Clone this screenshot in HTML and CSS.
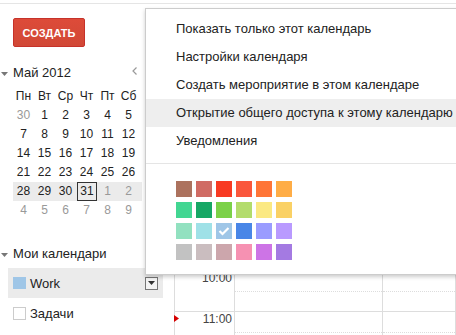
FILE: index.html
```html
<!DOCTYPE html>
<html>
<head>
    <title>Календарь</title>
    <link rel="stylesheet" href="styles.css">
</head>
<body>
    <div class="topbar"></div>
    <div class="page">
        <aside class="sidebar">
            <button class="create">СОЗДАТЬ</button>

            <div class="month-head">
                <span class="toggle"><svg width="7" height="4" viewBox="0 0 7 4"><polygon points="0,0 7,0 3.5,4" fill="#777"/></svg></span>
                <span class="month-title">Май 2012</span>
                <svg class="prev" width="5" height="8" viewBox="0 0 5 8"><polyline points="4.5,0.5 1,4 4.5,7.5" fill="none" stroke="#999" stroke-width="1.2"/></svg>
            </div>

            <div class="minical">
                <div class="week head"><span>Пн</span><span>Вт</span><span>Ср</span><span>Чт</span><span>Пт</span><span>Сб</span></div>
                <div class="week"><span class="other">30</span><span>1</span><span>2</span><span>3</span><span>4</span><span>5</span></div>
                <div class="week"><span>7</span><span>8</span><span>9</span><span>10</span><span>11</span><span>12</span></div>
                <div class="week"><span>14</span><span>15</span><span>16</span><span>17</span><span>18</span><span>19</span></div>
                <div class="week"><span>21</span><span>22</span><span>23</span><span>24</span><span>25</span><span>26</span></div>
                <div class="week current"><span>28</span><span>29</span><span>30</span><span class="today">31</span><span class="other">1</span><span class="other">2</span></div>
                <div class="week"><span class="other">4</span><span class="other">5</span><span class="other">6</span><span class="other">7</span><span class="other">8</span><span class="other">9</span></div>
            </div>

            <div class="section-head">
                <span class="toggle"><svg width="7" height="4" viewBox="0 0 7 4"><polygon points="0,0 7,0 3.5,4" fill="#777"/></svg></span>
                <span>Мои календари</span>
            </div>

            <div class="cal-item active">
                <span class="swatch"></span>
                <span>Work</span>
                <span class="dd-btn"><svg width="7" height="4" viewBox="0 0 7 4"><polygon points="0,0 7,0 3.5,4" fill="#333"/></svg></span>
            </div>
            <div class="cal-item">
                <span class="checkbox"></span>
                <span>Задачи</span>
            </div>
        </aside>

        <main class="grid">
            <div class="hour"><div class="time"></div><div class="day-col"></div><div class="day-col"></div></div>
            <div class="hour"><div class="time"></div><div class="day-col"></div><div class="day-col"></div></div>
            <div class="hour"><div class="time"></div><div class="day-col"></div><div class="day-col"></div></div>
            <div class="hour"><div class="time"></div><div class="day-col"></div><div class="day-col"></div></div>
            <div class="hour"><div class="time">10:00</div><div class="day-col"></div><div class="day-col"></div></div>
            <div class="hour">
                <svg class="now" width="5" height="7" viewBox="0 0 5 7"><polygon points="0,0 5,3.5 0,7" fill="#d50000"/></svg>
                <div class="time">11:00</div><div class="day-col"></div><div class="day-col"></div>
            </div>
        </main>
    </div>

    <!-- calendar options menu -->
    <div class="menu">
        <div class="menu-item">Показать только этот календарь</div>
        <div class="menu-item">Настройки календаря</div>
        <div class="menu-item">Создать мероприятие в этом календаре</div>
        <div class="menu-item hover">Открытие общего доступа к этому календарю</div>
        <div class="menu-item">Уведомления</div>
        <div class="menu-sep"></div>
        <div class="palette">
            <span style="background:#ac725e"></span>
            <span style="background:#d06b64"></span>
            <span style="background:#f83a22"></span>
            <span style="background:#fa573c"></span>
            <span style="background:#ff7537"></span>
            <span style="background:#ffad46"></span>
            <span style="background:#42d692"></span>
            <span style="background:#16a765"></span>
            <span style="background:#7bd148"></span>
            <span style="background:#b3dc6c"></span>
            <span style="background:#fbe983"></span>
            <span style="background:#fad165"></span>
            <span style="background:#92e1c0"></span>
            <span style="background:#9fe1e7"></span>
            <span style="background:#9fc6e7"><svg width="16" height="16" viewBox="0 0 16 16"><polyline points="3.5,8 6.5,11 12.5,5" fill="none" stroke="#fff" stroke-width="2.2"/></svg></span>
            <span style="background:#4986e7"></span>
            <span style="background:#9a9cff"></span>
            <span style="background:#b99aff"></span>
            <span style="background:#c2c2c2"></span>
            <span style="background:#cabdbf"></span>
            <span style="background:#cca6ac"></span>
            <span style="background:#f691b2"></span>
            <span style="background:#cd74e6"></span>
            <span style="background:#a47ae2"></span>
        </div>
    </div>
</body>
</html>
```

FILE: styles.css
```css
body {
    margin: 0;
    width: 456px;
    height: 335px;
    overflow: hidden;
    position: relative;
    background: #fff;
    color: #222;
    font-family: "Liberation Sans", Arial, sans-serif;
}
.topbar {
    height: 3px;
    border-bottom: 1px solid #e5e5e5;
}
.page {
    display: flex;
}

/* left column */
.sidebar {
    width: 174px;
    flex: none;
}
.create {
    display: block;
    margin: 14px 0 0 13px;
    width: 72px;
    height: 29px;
    padding: 0;
    border: 1px solid #c6322a;
    border-radius: 2px;
    background: linear-gradient(#dd4b39, #d14836);
    color: #fff;
    font: bold 11px "Liberation Sans", Arial, sans-serif;
}
.month-head,
.section-head {
    display: flex;
    align-items: center;
    height: 18px;
    width: 139px;
    font-size: 13px;
}
.month-head {
    margin-top: 16px;
}
.section-head {
    margin-top: 24px;
}
.toggle {
    width: 13px;
    flex: none;
    display: flex;
    padding-top: 3px;
}
.toggle svg {
    margin-left: 1px;
}
.month-title {
    flex: 1;
}
.prev {
    align-self: flex-start;
    margin-top: 4px;
    margin-right: 2px;
}

.minical {
    width: 129px;
    margin: 6px 0 0 13px;
    font-size: 12px;
}
.week {
    display: grid;
    grid-template-columns: repeat(6, 21px);
    height: 19px;
    line-height: 19px;
    text-align: center;
}
.week.current {
    background: #ebebeb;
}
.other {
    color: #999;
}
.today {
    box-sizing: border-box;
    height: 19px;
    margin-left: 1px;
    border: 1px solid #333;
    line-height: 17px;
}

.cal-item {
    display: flex;
    align-items: center;
    box-sizing: border-box;
    height: 30px;
    width: 155px;
    margin-left: 8px;
    padding-left: 5px;
    font-size: 13px;
}
.cal-item.active {
    margin-top: 6px;
    background: #ebebeb;
}
.swatch {
    width: 13px;
    height: 12px;
    margin-right: 4px;
    background: #9fc6e7;
}
.checkbox {
    width: 11px;
    height: 11px;
    margin-right: 4px;
    border: 1px solid #ccc;
    background: #fff;
}
.dd-btn {
    display: flex;
    align-items: center;
    justify-content: center;
    width: 11px;
    height: 11px;
    margin-left: auto;
    margin-right: 5px;
    border: 1px solid #777;
    background: #f4f4f4;
}

/* day grid */
.grid {
    flex: 1;
    margin-top: 102px;
    border-left: 1px solid #ddd;
}
.hour {
    position: relative;
    display: grid;
    grid-template-columns: 60px 148px 1fr;
    height: 40px;
    border-top: 1px solid #ddd;
}
.time {
    padding-right: 2px;
    border-right: 1px solid #ddd;
    text-align: right;
    font-size: 12px;
    line-height: 14px;
    color: #444;
}
.day-col {
    border-right: 1px solid #ddd;
}
.day-col::before {
    content: "";
    display: block;
    height: 20px;
    border-bottom: 1px dotted #ddd;
}
.now {
    position: absolute;
    left: -1px;
    top: 3px;
}

/* popup menu */
.menu {
    position: absolute;
    left: 145px;
    top: 8px;
    width: 340px;
    padding: 6px 0 14px;
    background: #fff;
    border: 1px solid rgba(0, 0, 0, 0.2);
    box-shadow: 0 2px 4px rgba(0, 0, 0, 0.2);
    font-size: 13px;
}
.menu-item {
    height: 28px;
    line-height: 28px;
    padding-left: 30px;
    white-space: nowrap;
}
.menu-item.hover {
    background: #eee;
}
.menu-sep {
    margin: 8px 0 17px;
    border-top: 1px solid #e5e5e5;
}
.palette {
    display: grid;
    grid-template-columns: repeat(6, 16px);
    grid-auto-rows: 16px;
    column-gap: 4px;
    row-gap: 5px;
    margin-left: 30px;
}
.palette span {
    display: block;
}
.palette svg {
    display: block;
}
```
